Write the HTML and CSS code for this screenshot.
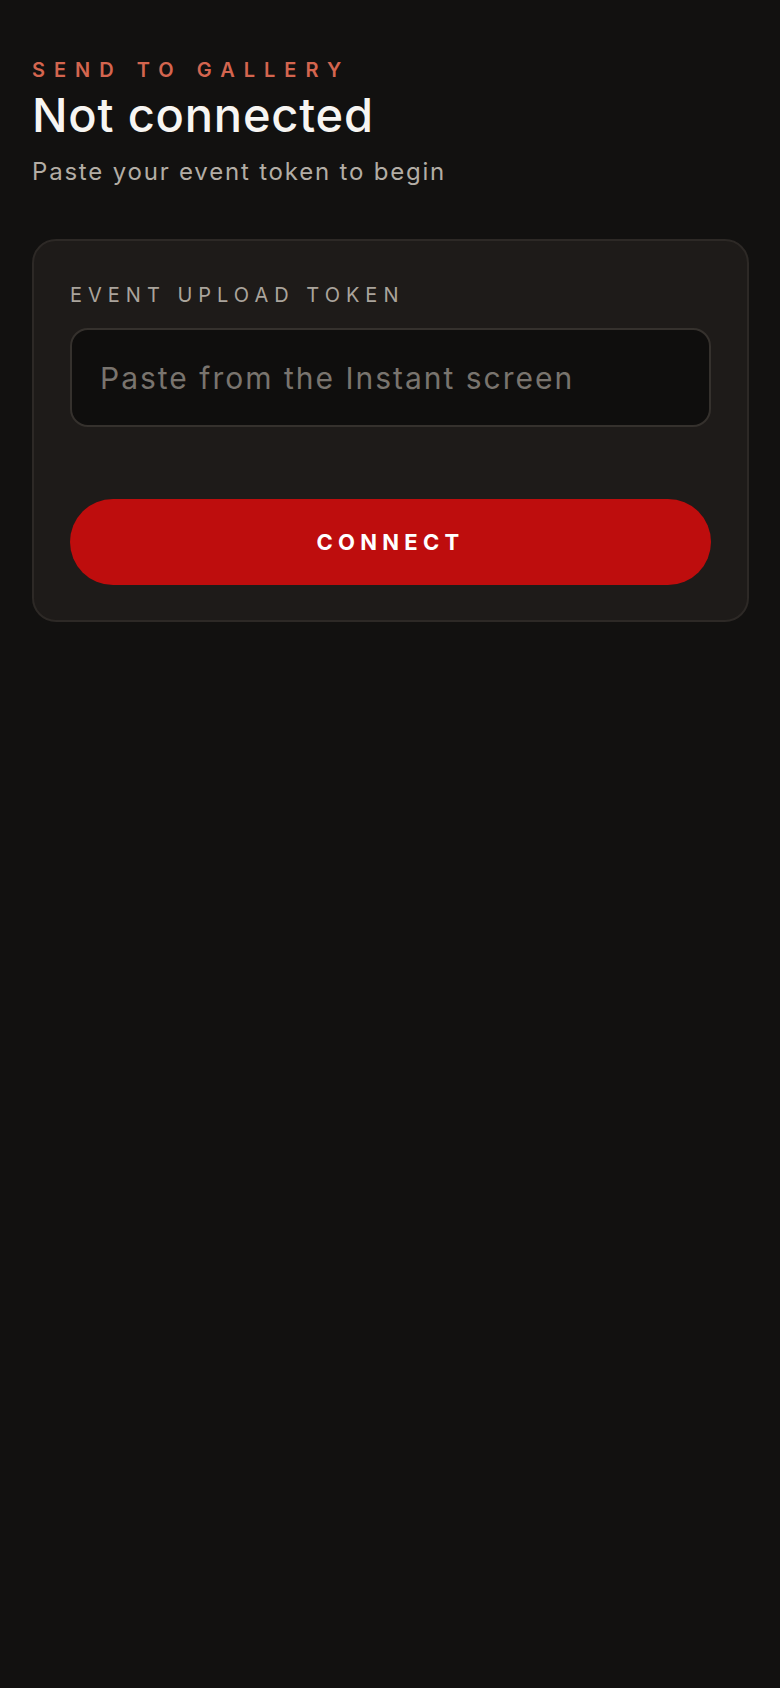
FILE: index.html
```html
<!DOCTYPE html>
<html lang="en">
<head>
<meta charset="UTF-8">
<meta name="viewport" content="width=device-width, initial-scale=1.0">
<title>Send to Gallery</title>
<link rel="stylesheet" href="styles.css">
</head>
<body>

<div class="screen">
  <div class="header">
    <div class="eyebrow">Send to Gallery</div>
    <h1 class="title">Not connected</h1>
    <p class="subtitle">Paste your event token to begin</p>
  </div>

  <div class="card">
    <label class="field-label" for="token">Event upload token</label>
    <input type="text" id="token" class="token-input" placeholder="Paste from the Instant screen">
    <button class="connect-btn">Connect</button>
  </div>
</div>

</body>
</html>
```

FILE: styles.css
```css
html, body {
  margin: 0;
  padding: 0;
  background-color: #121110;
}

body {
  font-family: Inter, "Open Sans", sans-serif;
  color: #f5f3f0;
  min-height: 1688px;
}

.screen {
  padding: 58px 31px 0 32px;
}

.header {
  margin-bottom: 52px;
}

.eyebrow {
  font-size: 20px;
  font-weight: 600;
  letter-spacing: 0.45em;
  text-transform: uppercase;
  color: #d4654f;
  line-height: 24px;
}

.title {
  margin: 6px 0 0;
  font-size: 47px;
  font-weight: 500;
  letter-spacing: 0.8px;
  line-height: 54px;
  color: #f7f5f2;
}

.subtitle {
  margin: 15px 0 0;
  font-size: 24px;
  font-weight: 400;
  letter-spacing: 1.8px;
  line-height: 30px;
  color: #b3ada5;
}

.card {
  background-color: #1e1b19;
  border: 2px solid #2d2926;
  border-radius: 24px;
  padding: 42px 36px 35px;
  display: flex;
  flex-direction: column;
}

.field-label {
  font-size: 20px;
  font-weight: 400;
  letter-spacing: 0.3em;
  text-transform: uppercase;
  color: #aaa49c;
  line-height: 24px;
}

.token-input {
  margin-top: 21px;
  height: 99px;
  box-sizing: border-box;
  padding: 0 28px;
  background-color: #0f0e0d;
  border: 2px solid #35312d;
  border-radius: 18px;
  font-family: inherit;
  font-size: 30px;
  letter-spacing: 2px;
  color: #f5f3f0;
  outline: none;
}

.token-input::placeholder {
  color: #79746e;
}

.connect-btn {
  margin-top: 72px;
  height: 86px;
  border: none;
  border-radius: 43px;
  background-color: #be0d0d;
  color: #fff;
  font-family: inherit;
  font-size: 22px;
  font-weight: 700;
  letter-spacing: 0.24em;
  text-transform: uppercase;
  cursor: pointer;
}
```
